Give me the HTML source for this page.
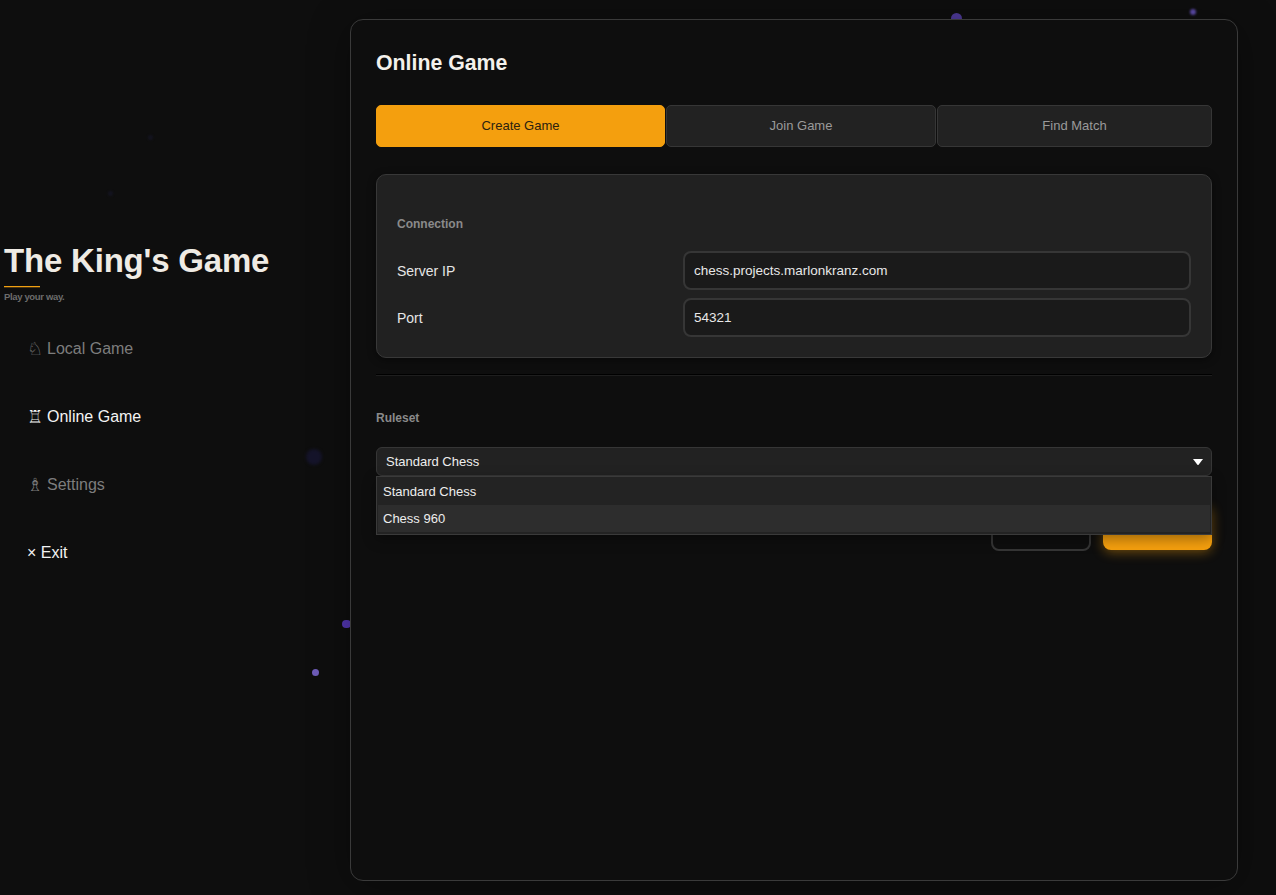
<!DOCTYPE html>
<html><head><meta charset="utf-8">
<style>
*{box-sizing:border-box;margin:0;padding:0}
html,body{width:1276px;height:895px;overflow:hidden;background:#0e0e0e;font-family:"Liberation Sans",sans-serif;position:relative}
.abs{position:absolute;white-space:nowrap}
.dot{position:absolute;border-radius:50%}
.title{left:4px;top:244px;font-size:33px;line-height:33px;font-weight:bold;color:#efebe4;letter-spacing:-0.2px}
.uline{left:4px;top:286px;width:36px;height:1px;background:#f0a012;box-shadow:0 0.6px 0 rgba(232,154,22,.5)}
.tag{left:4px;top:292px;font-size:9.5px;line-height:9.5px;font-weight:bold;color:#6c6c6c;letter-spacing:-0.35px}
.menu{left:47px;font-size:16px;line-height:16px}
.ico{position:absolute;left:-20.5px;top:-0.5px;font-size:18px;line-height:18px}
.panel{left:350px;top:19px;width:888px;height:862px;border:1.5px solid #3a3a3a;border-radius:13px;background:#0e0e0e;box-shadow:0 6px 40px rgba(0,0,0,.35)}
.h1{left:376px;top:53px;font-size:21.3px;line-height:21.3px;font-weight:bold;color:#f4f1ec}
.tab{top:105px;height:42px;border-radius:5px;background:#222;border:1px solid #363636;color:#9a9a9a;font-size:13px;line-height:13px}
.tab span{position:absolute;top:13px;left:0;right:0;text-align:center}
.tab.on{background:#f49f0e;border-color:#f49f0e;color:#2b2210}
.card{left:376px;top:174px;width:836px;height:184px;background:#212121;border:1px solid #383838;border-radius:10px;box-shadow:0 2px 8px rgba(0,0,0,.45)}
.lbl{font-size:12px;line-height:12px;font-weight:bold;color:#8a8a8a}
.flbl{left:397px;font-size:14px;line-height:14px;color:#e6e6e6}
.inp{left:683px;width:508px;height:39px;background:#1a1a1a;border:2px solid #363636;border-radius:8px}
.itx{left:694px;font-size:13.5px;line-height:13.5px;color:#e8e8e8}
.divider{left:376px;top:374px;width:836px;height:1px;background:#000}
.divider2{left:376px;top:375px;width:836px;height:1px;background:#1e1e1e}
.sel{left:376px;top:447px;width:836px;height:29px;background:#222;border:1px solid #363636;border-radius:6px}
.dd{left:376px;top:476px;width:836px;height:59px;background:#232323;border:1px solid #3a3a3a;box-shadow:0 4px 12px rgba(0,0,0,.35)}
.opt{position:absolute;left:1px;width:832px;height:27px}
.otx{font-size:13px;line-height:13px;color:#eee}
</style></head><body>
<!-- particles -->
<div class="dot" style="left:950.5px;top:12.5px;width:11px;height:11px;background:#4e3a98;filter:blur(.6px)"></div>
<div class="dot" style="left:1189.5px;top:9.3px;width:6px;height:6px;background:#5e4cac;filter:blur(.8px)"></div>
<div class="dot" style="left:342px;top:619.5px;width:8.5px;height:8.5px;background:#5236b0;filter:blur(.5px)"></div>
<div class="dot" style="left:311.8px;top:669px;width:7px;height:7px;background:#6e5cb8;filter:blur(.7px)"></div>
<div class="dot" style="left:306px;top:449px;width:16px;height:16px;background:#15142a;filter:blur(1.5px)"></div>
<div class="dot" style="left:148px;top:135px;width:5px;height:5px;background:#141420;filter:blur(1px)"></div>
<div class="dot" style="left:108px;top:191px;width:5px;height:5px;background:#141420;filter:blur(1px)"></div>
<div class="dot" style="left:614px;top:800px;width:6px;height:6px;background:#141420;filter:blur(1px)"></div>
<div class="dot" style="left:570px;top:70px;width:6px;height:6px;background:#141420;filter:blur(1px)"></div>
<div class="abs title">The King's Game</div>
<div class="abs uline"></div>
<div class="abs tag">Play your way.</div>

<div class="abs menu" style="top:340.5px;color:#7d7d7d"><span class="ico">♘</span>Local Game</div>
<div class="abs menu" style="top:408.5px;color:#f4f4f4"><span class="ico">♖</span>Online Game</div>
<div class="abs menu" style="top:476.7px;color:#7d7d7d"><span class="ico">♗</span>Settings</div>
<div class="abs menu" style="top:544.8px;left:27px;color:#f2f2f2">× Exit</div>

<div class="abs panel"></div>
<div class="abs h1">Online Game</div>
<div class="abs tab on" style="left:376px;width:289px"><span>Create Game</span></div>
<div class="abs tab" style="left:666px;width:270px"><span>Join Game</span></div>
<div class="abs tab" style="left:937px;width:275px"><span>Find Match</span></div>

<div class="abs card"></div>
<div class="abs lbl" style="left:397px;top:217.9px">Connection</div>
<div class="abs flbl" style="top:264.3px">Server IP</div>
<div class="abs inp" style="top:251px"></div>
<div class="abs itx" style="top:264.3px">chess.projects.marlonkranz.com</div>
<div class="abs flbl" style="top:311.1px">Port</div>
<div class="abs inp" style="top:298px"></div>
<div class="abs itx" style="top:310.6px">54321</div>

<div class="abs divider"></div>
<div class="abs divider2"></div>
<div class="abs lbl" style="left:376px;top:411.8px">Ruleset</div>

<div class="abs" style="left:991px;top:505px;width:100px;height:46px;border:2px solid #353535;border-radius:8px;background:#0e0e0e"></div>
<div class="abs" style="left:1103px;top:505px;width:109px;height:45px;border-radius:8px;background:#f49f0e;box-shadow:0 2px 12px rgba(244,159,14,.45)"></div>

<div class="abs sel"></div>
<div class="abs otx" style="left:386px;top:455px">Standard Chess</div>
<svg class="abs" style="left:1193px;top:458.5px" width="10" height="6.5" viewBox="0 0 10 6.5"><path d="M0 0H10L5 6.5Z" fill="#fff"/></svg>
<div class="abs dd">
  <div class="opt" style="top:0;background:#232323"></div>
  <div class="opt" style="top:27.5px;background:#2d2d2d"></div>
</div>
<div class="abs otx" style="left:383px;top:484.8px">Standard Chess</div>
<div class="abs otx" style="left:383px;top:511.8px">Chess 960</div>
</body></html>
